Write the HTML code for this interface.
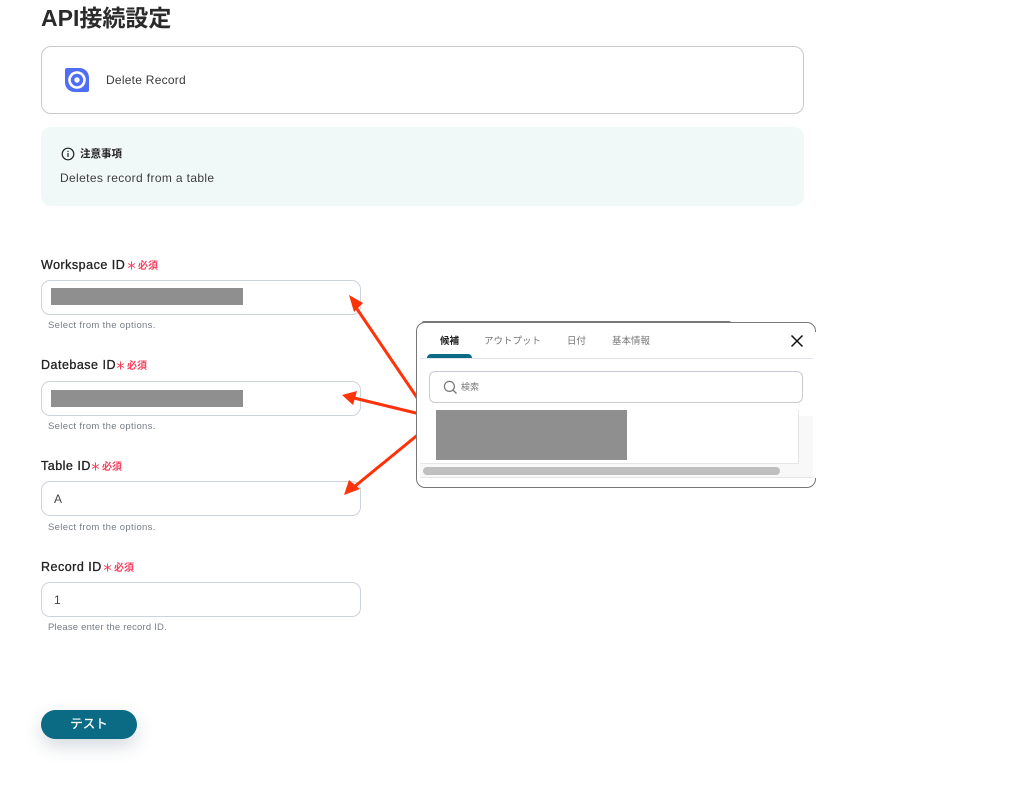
<!DOCTYPE html>
<html><head><meta charset="utf-8">
<style>
*{box-sizing:border-box}
html,body{margin:0;padding:0;background:#fff}
body{width:1035px;height:810px;position:relative;overflow:hidden;font-family:"Liberation Sans","Noto Sans CJK JP",sans-serif;color:#333}
.a{position:absolute;white-space:nowrap}
.input{position:absolute;left:41px;width:320px;height:35px;border:1px solid #cdd3dc;border-radius:9px;background:#fff;font-size:12px;line-height:35px;padding-left:12px;color:#444}
.gray{position:absolute;background:#8f8f8f}
.label{position:absolute;left:41px;font-size:12.5px;font-weight:400;color:#222;line-height:16px;white-space:nowrap;-webkit-text-stroke:.3px #222;letter-spacing:.5px}
.req{color:#f5405e;font-size:10px;font-weight:700;-webkit-text-stroke:0;letter-spacing:0;position:absolute;white-space:nowrap}
.req svg{position:absolute;left:0;top:3px}
.req span{position:absolute;left:11px;top:1px;line-height:16px}
.hint{position:absolute;left:48px;font-size:9.5px;color:#777d85;line-height:12px;white-space:nowrap;letter-spacing:.33px}
.tab{position:absolute;top:335px;font-size:9.5px;line-height:13px;color:#777;white-space:nowrap}
</style></head><body>
<div class="a" style="left:41px;top:2px;font-size:23px;line-height:32px;font-weight:700;color:#2b2b2b">API接続設定</div>

<div class="a" style="left:41px;top:46px;width:763px;height:68px;border:1px solid #c9c9c9;border-radius:10px"></div>
<svg class="a" style="left:64px;top:67px" width="26" height="26" viewBox="0 0 26 26"><path d="M3 1H15C21 1 25 5 25 11V23C25 24.200 24.200 25 23 25H11C5 25 1 21 1 15V3C1 1.800 1.800 1 3 1Z" fill="#4f6ef7"/><circle cx="13" cy="13" r="8.800" fill="#fff"/><circle cx="13" cy="13" r="6.200" fill="#4f6ef7"/><circle cx="13" cy="13" r="2.700" fill="#fff"/></svg>
<div class="a" style="left:106px;top:72px;font-size:12px;line-height:16px;color:#3a3a3a;letter-spacing:.25px">Delete Record</div>

<div class="a" style="left:41px;top:127px;width:763px;height:79px;background:#f1f9f8;border-radius:10px"></div>
<svg class="a" style="left:61px;top:147px" width="14" height="14" viewBox="0 0 14 14"><circle cx="7" cy="7" r="5.800" fill="none" stroke="#222" stroke-width="1.200"/><rect x="6.400" y="6" width="1.200" height="4" fill="#222"/><rect x="6.400" y="3.800" width="1.200" height="1.300" fill="#222"/></svg>
<div class="a" style="left:80px;top:147px;font-size:10.5px;line-height:14px;font-weight:700;color:#222">注意事項</div>
<div class="a" style="left:60px;top:170px;font-size:12px;line-height:16px;color:#3d3d3d;letter-spacing:.36px">Deletes record from a table</div>

<div class="label" style="top:257px">Workspace ID</div>
<div class="req" style="left:127px;top:258px"><svg width="9" height="9" viewBox="0 0 9 9"><path d="M4.500 .5V8.500M1 2.500L8 6.500M8 2.500L1 6.500" stroke="#f5405e" stroke-width="1"/></svg><span>必須</span></div>
<div class="input" style="top:280px"></div>
<div class="gray" style="left:51px;top:288px;width:192px;height:17px"></div>
<div class="hint" style="top:320px">Select from the options.</div>

<div class="label" style="top:357px">Datebase ID</div>
<div class="req" style="left:116px;top:358px"><svg width="9" height="9" viewBox="0 0 9 9"><path d="M4.500 .5V8.500M1 2.500L8 6.500M8 2.500L1 6.500" stroke="#f5405e" stroke-width="1"/></svg><span>必須</span></div>
<div class="input" style="top:381px"></div>
<div class="gray" style="left:51px;top:390px;width:192px;height:17px"></div>
<div class="hint" style="top:421px">Select from the options.</div>

<div class="label" style="top:458px">Table ID</div>
<div class="req" style="left:91px;top:459px"><svg width="9" height="9" viewBox="0 0 9 9"><path d="M4.500 .5V8.500M1 2.500L8 6.500M8 2.500L1 6.500" stroke="#f5405e" stroke-width="1"/></svg><span>必須</span></div>
<div class="input" style="top:481px">A</div>
<div class="hint" style="top:522px">Select from the options.</div>

<div class="label" style="top:559px">Record ID</div>
<div class="req" style="left:103px;top:560px"><svg width="9" height="9" viewBox="0 0 9 9"><path d="M4.500 .5V8.500M1 2.500L8 6.500M8 2.500L1 6.500" stroke="#f5405e" stroke-width="1"/></svg><span>必須</span></div>
<div class="input" style="top:582px">1</div>
<div class="hint" style="top:622px;letter-spacing:.2px">Please enter the record ID.</div>

<div class="a" style="left:41px;top:710px;width:96px;height:29px;border-radius:15px;background:#0b6a84;color:#fff;font-size:12.5px;line-height:29px;text-align:center;-webkit-text-stroke:.25px #fff;box-shadow:0 7px 18px rgba(40,70,90,.2)">テスト</div>

<!-- arrows -->
<svg class="a" style="left:0;top:0" width="1035" height="810" viewBox="0 0 1035 810">
<g stroke="#ff3208" stroke-width="3" fill="none"><path d="M420 402L355 306"/><path d="M420 414L354 398"/><path d="M420 433L354 487"/></g>
<g fill="#ff3208"><path d="M349 295L363 303L354 312Z"/><path d="M342 395L357 391L353 405Z"/><path d="M344 495L349 480L360 489Z"/></g>
</svg>

<!-- popup -->
<div class="a" style="left:422px;top:321px;width:309px;height:3px;background:#777;border-radius:2px 2px 0 0"></div>
<div class="a" style="left:416px;top:322px;width:400px;height:166px;background:#fff;border:1px solid #777;border-radius:9px;overflow:hidden"></div>
<div class="a" style="left:813px;top:332px;width:4px;height:146px;background:#fff"></div>
<div class="tab" style="left:440px;color:#222;font-weight:700">候補</div>
<div class="tab" style="left:484px">アウトプット</div>
<div class="tab" style="left:567px">日付</div>
<div class="tab" style="left:612px">基本情報</div>
<div class="a" style="left:427px;top:354px;width:45px;height:4px;background:#0b6a84;border-radius:4px 4px 0 0"></div>
<div class="a" style="left:420px;top:358px;width:393px;height:1px;background:#e0e3e7"></div>
<svg class="a" style="left:790px;top:334px" width="14" height="14" viewBox="0 0 14 14"><path d="M1.500 1.500L12.500 12.500M12.500 1.500L1.500 12.500" stroke="#111" stroke-width="1.500" fill="none"/></svg>
<div class="a" style="left:429px;top:371px;width:374px;height:32px;border:1px solid #c9ccd2;border-radius:6px"></div>
<svg class="a" style="left:443px;top:380px" width="15" height="15" viewBox="0 0 15 15"><circle cx="6.400" cy="6.400" r="5" fill="none" stroke="#777" stroke-width="1.200"/><path d="M10 10L13.500 13.500" stroke="#777" stroke-width="1.300"/></svg>
<div class="a" style="left:461px;top:381px;font-size:9px;line-height:13px;color:#777">検索</div>
<div class="a" style="left:420px;top:416px;width:393px;height:62px;background:#f8f8f8;border-bottom:1px solid #e6e6e6"></div>
<div class="a" style="left:420px;top:410px;width:379px;height:54px;background:#fff;border-right:1px solid #e6e6e6;border-bottom:1px solid #e6e6e6"></div>
<div class="gray" style="left:436px;top:410px;width:191px;height:50px"></div>
<div class="a" style="left:423px;top:467px;width:357px;height:8px;background:#bfbfbf;border-radius:4px"></div>
</body></html>
